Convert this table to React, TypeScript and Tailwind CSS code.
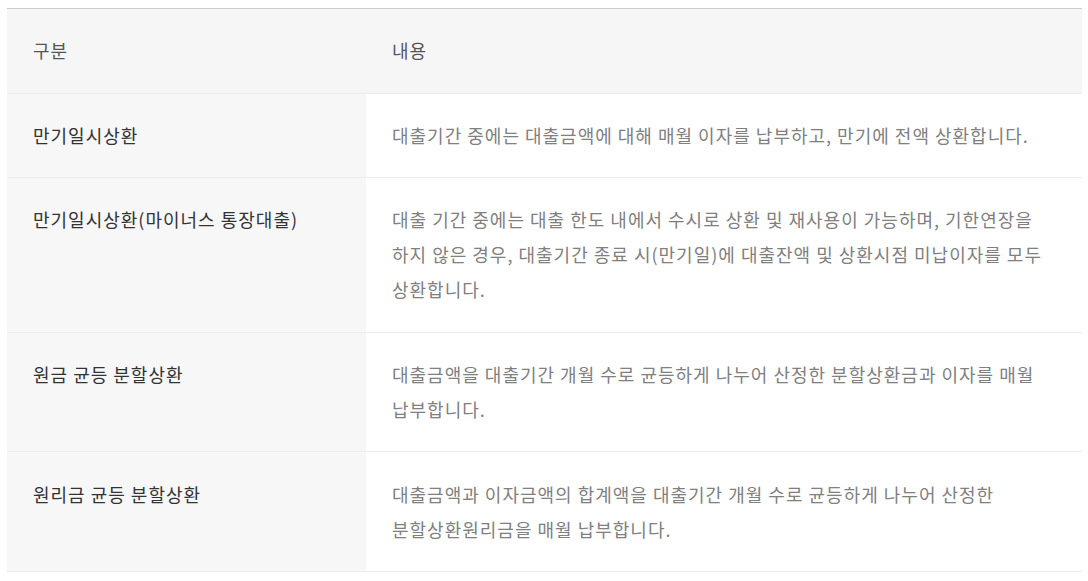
import React from 'react';

const rows = [
  {
    title: '만기일시상환',
    desc: '대출기간 중에는 대출금액에 대해 매월 이자를 납부하고, 만기에 전액 상환합니다.',
  },
  {
    title: '만기일시상환(마이너스 통장대출)',
    desc: '대출 기간 중에는 대출 한도 내에서 수시로 상환 및 재사용이 가능하며, 기한연장을 하지 않은 경우, 대출기간 종료 시(만기일)에 대출잔액 및 상환시점 미납이자를 모두 상환합니다.',
  },
  {
    title: '원금 균등 분할상환',
    desc: '대출금액을 대출기간 개월 수로 균등하게 나누어 산정한 분할상환금과 이자를 매월 납부합니다.',
  },
  {
    title: '원리금 균등 분할상환',
    desc: '대출금액과 이자금액의 합계액을 대출기간 개월 수로 균등하게 나누어 산정한 분할상환원리금을 매월 납부합니다.',
  },
];

export default function App() {
  return (
    <div className="min-h-screen bg-white pt-[8px] pl-[7px] pr-[6px] font-['Noto_Sans_CJK_KR',sans-serif]">
      <table className="w-full border-collapse border-t border-t-[#cccccc] text-[18px] leading-[35px] tracking-[1px] [word-break:keep-all]">
        <thead>
          <tr className="bg-[#f6f6f6] border-b border-b-[#ececec]">
            <th className="w-[359px] px-[26px] py-[24.3px] text-left font-normal text-[#555]">구분</th>
            <th className="px-[26px] py-[24.3px] text-left font-normal text-[#555]">내용</th>
          </tr>
        </thead>
        <tbody>
          {rows.map((row) => (
            <tr key={row.title} className="border-b border-b-[#ececec] align-top">
              <td className="bg-[#f7f7f7] px-[26px] py-[24.3px] font-normal text-[#333]">{row.title}</td>
              <td className="bg-white px-[26px] py-[24.3px] text-[#808080]">{row.desc}</td>
            </tr>
          ))}
        </tbody>
      </table>
    </div>
  );
}
